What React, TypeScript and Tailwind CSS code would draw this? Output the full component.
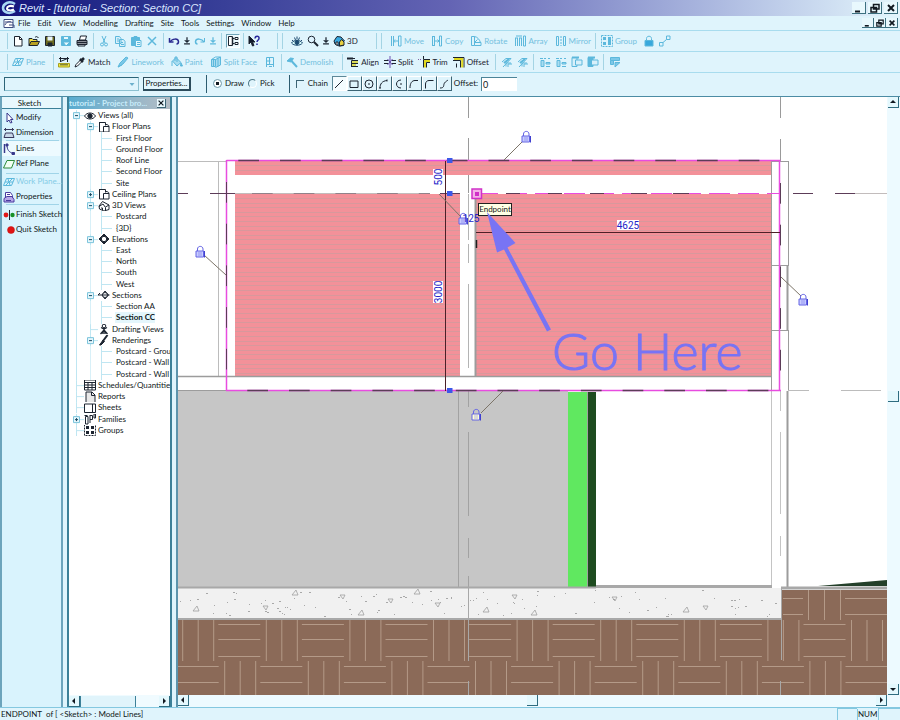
import React from "react";

const CYAN = "#5cb8dc";
const INK = "#1c2430";

type IconProps = { children: React.ReactNode; color?: string; size?: string };

function Icon({ children, color = INK, size = "h-3 w-3" }: IconProps) {
  return (
    <svg viewBox="0 0 12 12" className={`${size} shrink-0`} fill="none" stroke={color} strokeWidth="1" aria-hidden="true">
      {children}
    </svg>
  );
}

/* ---------- toolbar glyphs ---------- */

const NewIcon = () => (
  <Icon><path d="M2.500 1.500h5l2.500 2.500v7h-7.500z" fill="#fff" /><path d="M7.500 1.500v3h2.500" /></Icon>
);
const OpenIcon = () => (
  <Icon><path d="M1 10.500V3.500h3l1 1h4v2" fill="#f4e04a" /><path d="M1 10.500l2-4h8.500l-2 4z" fill="#b8a020" /><path d="M7 2.500c1-1.500 2.500-1 3.500.5" /></Icon>
);
const SaveIcon = () => (
  <Icon><path d="M1.500 1.500h9v9h-9z" fill="#6c6a20" /><path d="M3.500 1.500h5v4h-5z" fill="#e8f4f8" stroke="none" /><path d="M4 8h4v3H4z" fill="#1c2430" /></Icon>
);
const SaveAllIcon = () => (
  <Icon color={CYAN}><path d="M1.500 1.500h9v9h-9z" fill="#5cb8dc" /><path d="M3.500 1.500h5v3h-5z" fill="#e8f8fd" /><path d="M3 7l3 4 4-4z" fill="#e8f8fd" /></Icon>
);
const PrintIcon = () => (
  <Icon><path d="M3.500 5l1-4h6l-1 4z" fill="#fff" /><path d="M1 5.500h10v4H1z" fill="#8a8f98" /><path d="M2 9.500h7v1.500H2zM1 7.500h10" /></Icon>
);
const CutIcon = () => (
  <Icon color={CYAN}><path d="M4 1l3 7M8 1L5 8" /><circle cx="4" cy="9.500" r="1.500" /><circle cx="8" cy="9.500" r="1.500" /></Icon>
);
const CopyIcon = () => (
  <Icon color={CYAN}><path d="M1.500 1.500h4l1.500 2v5H1.500zM5.500 4.500h4l1.500 2v5H5.500z" fill="#d8f0fa" /><path d="M3 4h2M3 6h2M7 7.500h2M7 9.500h3" /></Icon>
);
const PasteIcon = () => (
  <Icon color={CYAN}><path d="M1.500 2.500h8v8h-8z" fill="#5cb8dc" /><path d="M4 1.500h3v2H4z" /><path d="M5.500 5.500h5.500v6H5.500z" fill="#e8f8fd" /><path d="M7 7.500h3M7 9.500h3" /></Icon>
);
const DeleteIcon = () => (
  <Icon color={CYAN}><path d="M2 2l8 8M10 2l-8 8" strokeWidth="1.500" /></Icon>
);
const UndoIcon = () => (
  <Icon color="#2a2a90"><path d="M1.500 3v4h4" strokeWidth="1.500" /><path d="M2 7c2-3.500 8-4 8.500-.5 0 1.500-1 2.500-2 2.500" strokeWidth="1.500" /></Icon>
);
const RedoIcon = () => (
  <Icon color={CYAN}><path d="M10.500 3v4h-4" /><path d="M10 7C8 3.500 2 3 1.500 6.500 1.500 8 2.500 9 3.500 9" strokeWidth="1.500" /></Icon>
);
const DropIcon = ({ color = INK }: { color?: string }) => (
  <Icon color={color} size="h-3 w-2.5"><path d="M6 1.500v4M2.500 9.500h7" strokeWidth="1.500" /><path d="M2.500 5h7L6 8.500z" fill={color} stroke="none" /></Icon>
);
const BrowserIcon = () => (
  <Icon><path d="M1.500 1.500h4v9h-4zM5.500 3.500h2M5.500 8.500h2M8 2.500h3v2H8zM8 7.500h3v2H8z" fill="#fff" /><path d="M5.500 2v8" strokeWidth="1.500" /></Icon>
);
const HelpIcon = () => (
  <Icon><path d="M1 1v8l2-2 1.500 4 1.500-.5L4.500 7H7z" fill="#10182a" /><path d="M7 3.500C7 .5 11.500.5 11 3.500c0 1.500-2 1.500-2 3.500M9 8.500v1.500" stroke="#28289c" strokeWidth="1.500" /></Icon>
);
const EyeIcon = () => (
  <Icon color="#1c4a70"><path d="M.5 8C3 4.500 9 4.500 11.500 8 9 11 3 11 .5 8z" fill="#dff" /><circle cx="6" cy="7.500" r="2" fill="#1c4a70" /><path d="M1 5l1.500 1.500M3.500 2.500L4.500 5M6 1.500v3M8.500 2.500L7.500 5M11 5L9.500 6.500" /></Icon>
);
const ZoomIcon = () => (
  <Icon><circle cx="4.500" cy="4.500" r="3.300" fill="#dff4ff" /><path d="M7 7l4 4" strokeWidth="2" /></Icon>
);
const HouseIcon = () => (
  <Icon><path d="M1 6l3-4.500 4 .5 3.500 4-1 .5v4L6 11 2 9z" fill="#38a8e0" /><path d="M6.500 7l2-2.500 2.500 2.500v3L6.500 11z" fill="#e8d040" /><path d="M3 7h2v3H3z" fill="#fff" /></Icon>
);
const MoveIcon = () => (
  <Icon color={CYAN}><path d="M1.500 1v10M3.500 1v10M8.500 1v10h2.500V1zM3.500 6h5M5 4.500L3.500 6 5 7.500" /></Icon>
);
const CopyObjIcon = () => (
  <Icon color={CYAN}><path d="M1.500 1v10M3.500 1v10M1.500 1.500h2M1.500 10.500h2M8.500 1v10h2V1zM3.500 6H8M6.500 4.500L8 6 6.500 7.500" /></Icon>
);
const RotateIcon = () => (
  <Icon color={CYAN}><path d="M1.500 1.500h3v9h-3zM4.500 1.500c3 .5 5 3 6 6M4.500 10.500h6.500v-3H4.500M4.500 7.500l3-3" /></Icon>
);
const ArrayIcon = () => (
  <Icon color={CYAN}><path d="M1.500 3v8M3.500 3v8M5.500 3v8M7.500 3v8M9.500 1v10h2V1zM1 3h3M5 3h3M2 1h6" /></Icon>
);
const MirrorIcon = () => (
  <Icon color={CYAN}><path d="M1.500 1.500h2v9h-2zM8.500 1.500h2v9h-2z" /><path d="M6 1v10" strokeDasharray="2 1" /></Icon>
);
const GroupIcon = () => (
  <Icon color={CYAN}><path d="M.5 .5h11v11H.5z" strokeDasharray="2 1" /><path d="M2 2h3v3H2zM2 7h3v3H2zM7 2h3v8H7z" fill={CYAN} stroke="none" /></Icon>
);
const PinIcon = () => (
  <Icon color={CYAN}><path d="M3.500 6V3.500c0-3 5-3 5 0V6" /><path d="M2 5.500h8V11H2z" fill="#38a8dc" /></Icon>
);
const LinkIcon = () => (
  <Icon color={CYAN}><path d="M.5 7.500h3.500V11H.5zM7.500 1h3.500v3.500H7.500zM4 7.500L7.500 4.500" /></Icon>
);

const PlaneIcon = () => (
  <Icon color={CYAN}><path d="M3.500 2.500h8l-3 7H.5zM3 9L9 3M5 3l2 6M2 6h8" /></Icon>
);
const TapeIcon = () => (
  <Icon><path d="M2.500 1v5M9.500 1v5M1 2.500h10M2.500 5.500l7-3" /><path d="M.5 7.500h11v3.500H.5z" fill="#f0e840" stroke="#a8a020" /><path d="M3 8v1.500M5 8v1.500M7 8v1.500M9 8v1.500" /></Icon>
);
const MatchIcon = () => (
  <Icon><path d="M1 11l1-2.500L7 3.500l1.500 1.500-5 5z" fill="#fff" /><path d="M6 3l3 3M8 4l2-2" strokeWidth="2.500" /></Icon>
);
const LineworkIcon = () => (
  <Icon color={CYAN}><path d="M1 11l2-4 6-6 2 1-5 6z" fill="#7cc8e8" /><path d="M1 11l4-2" /></Icon>
);
const PaintIcon = () => (
  <Icon color={CYAN}><path d="M1.500 5L5 1.500l5 5L6 10z" fill="#a8dcf0" /><path d="M4 5V1h2v5" /><path d="M10 7l1.500 3h-2zM1 5v5" fill={CYAN} /></Icon>
);
const SplitFaceIcon = () => (
  <Icon color={CYAN}><path d="M1.500 3.500h4v7h-4zM5.500 3.500L10.500 1v8l-5 2.500" fill="#a8dcf0" /><path d="M3.500 3v8M8 2.500v8M1.500 3.500l4-2.500h5" /></Icon>
);
const DoorIcon = () => (
  <Icon color={CYAN}><path d="M2.500 1.500h7v7h-7zM5.500 1.500v7M2.500 5h4M2.500 8v3M9.500 5v6M5 10.500h3" /></Icon>
);
const HammerIcon = () => (
  <Icon color={CYAN}><path d="M1 5l3.500-3 3 .5L5 6z" fill={CYAN} /><path d="M5.500 5L11 11" strokeWidth="2" /></Icon>
);
const AlignIcon = () => (
  <Icon><path d="M0 2.500h8M1 1v3M3 1v3M5 1v3" /><path d="M4.500 4.500H11M4.500 4.500V11M4.500 7.500H11M4.500 10.500H11" /><path d="M5 6h6M5 9h4" stroke="#d8d020" strokeWidth="1.500" /></Icon>
);
const SplitIcon = () => (
  <Icon><path d="M0 4.500h4.500M0 7.500h4.500M7.500 4.500H12M7.500 7.500H12" /><path d="M6 0v12M3.500 3l5 6M8.500 3l-5 6" stroke="#6a50b0" /></Icon>
);
const TrimIcon = () => (
  <Icon><path d="M0 3.500h4" stroke="#8060a0" strokeDasharray="1 1" /><path d="M5.500 11.500v-8H12M8.500 11.500v-5H12M5.500 0v3" /><path d="M7 11.500V5h5" stroke="#e0d820" strokeWidth="2" /></Icon>
);
const OffsetIcon = () => (
  <Icon><path d="M0 1.500h11v10M0 4.500h7.500v7" /><path d="M1 3h8.200v8.500" stroke="#e0d820" strokeWidth="2" /><path d="M3.500 7.500v4" /></Icon>
);
const TrimOneIcon = () => (
  <Icon color={CYAN}><path d="M1 6l4-3.500h5L2 11" /><path d="M3 7l5-4" strokeWidth="2" /><path d="M5 10.500V7h5M7 11V8h4" /></Icon>
);
const AttachIcon = () => (
  <Icon color={CYAN}><path d="M1 2.500h3M5 2.500h2M9 2.500h2M2 4.500v6h3v-6zM7 6.500h4v1.500H7zM7 10.500h4" fill="#a8dcf0" /></Icon>
);
const JoinIcon = ({ solid = false }: { solid?: boolean }) => (
  <Icon color={CYAN}><path d="M1 1.500h5v9H1z" fill={solid ? CYAN : "#d8f0fa"} /><path d="M4.500 4h6.500v5H4.500z" fill="#d8f0fa" /><path d="M1 1.500h7" strokeWidth="2" /></Icon>
);
const TagIcon = () => (
  <Icon color={CYAN}><path d="M1.500 1.500h9v3h-9zM1.500 4.500v4h3v-4M6 11V6.500h5L6 11z" fill="#7cc8e8" /></Icon>
);

/* ---------- sketch panel glyphs ---------- */

const ArrowIcon = () => (
  <Icon color="#38388c"><path d="M4 1v9l2-2 1.500 3 1.500-.5L7.500 7.500H10z" fill="#fff" /></Icon>
);
const DimIcon = () => (
  <Icon color="#38385c"><path d="M1 2.500h10M2.500 1v3M9.500 1v3" /><path d="M2.500 6h7l1.500 4.500H1z" fill="#c8d8e8" /></Icon>
);
const LinesIcon = () => (
  <Icon color="#38388c"><path d="M1.500 1v9" strokeWidth="1.500" /><path d="M4 2c0 5 2 7 6 8.500" /><path d="M3 1h2v2H3zM9 9.500h2.500v2H9z" fill="#38388c" /></Icon>
);
const RefIcon = () => (
  <Icon color="#2e8b3a"><path d="M4 2.500h7.500l-3 7.500H.5z" fill="#f2fff2" /></Icon>
);
const PropsIcon = () => (
  <Icon color="#4a3aa0"><path d="M2.500 1.500h5l2 3v4h-7z" fill="#fff" /><path d="M1 7.500l3-2h5l2 3v2.500H1z" fill="#b8a8e8" /><path d="M4 3.500h3M3 9.500h5" /></Icon>
);
const FinishIcon = () => (
  <Icon><circle cx="3" cy="6" r="2.400" fill="#e01818" stroke="none" /><circle cx="9.500" cy="6" r="2.200" fill="#189028" stroke="none" /><path d="M6.500 1v10" /></Icon>
);
const QuitIcon = () => (
  <Icon><circle cx="8" cy="6" r="3.500" fill="#e01414" stroke="#c01010" strokeWidth=".5" /></Icon>
);

/* ---------- tree glyphs ---------- */

const treeIcons: Record<string, React.ReactNode> = {
  eye: <><path d="M.5 6C3 2 9 2 11.500 6 9 10 3 10 .5 6z" fill="#fff" /><circle cx="6" cy="6" r="2.200" fill={INK} /></>,
  plan: <><path d="M1.500 1v10h4M1.500 1.500h6v3M5.500 5.500h5.500v5.500H5.500zM8 3.500c2 0 3 1 3 2" fill="#fff" /></>,
  house: <><path d="M1 6l3.500-4.500L11 5v4.500L6 11 1.500 9z" fill="#fff" /><path d="M1 6.500l4-2.500 2.500 3.500V11M7.500 7L11 5M3 8h1.500v2" /></>,
  elev: <><path d="M6 1l5 5-5 5-5-5z" fill={INK} /><circle cx="6" cy="6" r="2.700" fill="#fff" /></>,
  section: <><path d="M0 6h11.500M0 6l2-2M7 2l3.500 4L7 10 4 6z" /><circle cx="7" cy="6" r="2.500" fill="#fff" /><path d="M4.500 6h5" /></>,
  draft: <><circle cx="6" cy="3" r="1.800" /><path d="M6 5v3M3 4.500l3 1.500 3-1.500M6 7l-3.500 4M6 7l3.500 4M3 10h6" strokeWidth="1.300" /></>,
  brush: <><path d="M9.500 1L5 7" strokeWidth="2" /><path d="M5 6l1.500 1.500L3 11H1.500L3 9z" fill={INK} /></>,
  table: <><path d="M.5 1h11v10H.5zM.5 3.500h11M.5 6h11M.5 8.500h11M4 3.500V11M8 3.500V11" /></>,
  report: <><path d="M2 1h6l3 3v7.500H2z" fill="#e8e8e8" /><path d="M7.500 1v3.500H11" /></>,
  sheet: <><path d="M.5 2h11v8.500H.5z" fill="#fff" /><path d="M8.500 2v8.500" /></>,
  family: <><path d="M1.500 3.500h2.500V11H1.500zM6 2v8M6 2.500h2.500v4H6M10 1h1.500v4H10z" /><path d="M.5 2.500h3" /></>,
  group: <><path d="M.5.500h11v11H.5z" strokeDasharray="2 1" /><path d="M2 2h3v3H2zM2 7h3v3H2zM7 2h3v3H7zM7 7h3v3H7z" fill={INK} stroke="none" /></>,
};

type Row = { text: string; level: 0 | 1 | 2; icon?: string; box?: "-" | "+"; bold?: boolean };

const rows: Row[] = [
  { text: "Views (all)", level: 0, icon: "eye", box: "-" },
  { text: "Floor Plans", level: 1, icon: "plan", box: "-" },
  { text: "First Floor", level: 2 },
  { text: "Ground Floor", level: 2 },
  { text: "Roof Line", level: 2 },
  { text: "Second Floor", level: 2 },
  { text: "Site", level: 2 },
  { text: "Ceiling Plans", level: 1, icon: "plan", box: "+" },
  { text: "3D Views", level: 1, icon: "house", box: "-" },
  { text: "Postcard", level: 2 },
  { text: "{3D}", level: 2 },
  { text: "Elevations", level: 1, icon: "elev", box: "-" },
  { text: "East", level: 2 },
  { text: "North", level: 2 },
  { text: "South", level: 2 },
  { text: "West", level: 2 },
  { text: "Sections", level: 1, icon: "section", box: "-" },
  { text: "Section AA", level: 2 },
  { text: "Section CC", level: 2, bold: true },
  { text: "Drafting Views", level: 1, icon: "draft" },
  { text: "Renderings", level: 1, icon: "brush", box: "-" },
  { text: "Postcard - Grou", level: 2 },
  { text: "Postcard - Wall", level: 2 },
  { text: "Postcard - Wall", level: 2 },
  { text: "Schedules/Quantitie", level: 0, icon: "table" },
  { text: "Reports", level: 0, icon: "report" },
  { text: "Sheets", level: 0, icon: "sheet" },
  { text: "Families", level: 0, icon: "family", box: "+" },
  { text: "Groups", level: 0, icon: "group" },
];

function Expander({ box }: { box?: "-" | "+" }) {
  return (
    <svg viewBox="0 0 11 11" className="h-full w-[11px] shrink-0" fill="none" stroke="#bfe6f2" aria-hidden="true">
      <path d="M3.500 0v11M3.500 5.500H11" />
      {box && <path d="M.5 2.500h6v6h-6z" fill="#e4f6fc" stroke="#7cc4dc" />}
      {box && <path d={box === "+" ? "M2 5.500h3M3.500 4v3" : "M2 5.500h3"} stroke="#1c4860" />}
    </svg>
  );
}

function TreeRow({ row }: { row: Row }) {
  return (
    <li className="flex min-w-0 items-center overflow-hidden">
      {row.level === 0 && <Expander box={row.box} />}
      {row.level > 0 && <span className="ml-[3px] h-full w-[11px] shrink-0 border-l border-[#bfe6f2]" />}
      {row.level === 1 && <Expander box={row.box} />}
      {row.level === 2 && <span className="ml-[3px] h-full w-[11px] shrink-0 border-l border-[#d8f0f8]" />}
      {row.level === 2 && (
        <span className="flex h-full w-3.5 shrink-0 items-center border-l border-[#bfe6f2]">
          <span className="w-2.5 border-t border-[#bfe6f2]" />
        </span>
      )}
      {row.icon && <Icon>{treeIcons[row.icon]}</Icon>}
      <span className={`whitespace-nowrap ${row.icon ? "pl-0.5" : "pl-px"} ${row.bold ? "bg-[#e4f6fc] font-bold" : ""}`}>{row.text}</span>
    </li>
  );
}

/* ---------- toolbar parts ---------- */

const Sep = () => (
  <span className="flex h-4 w-1.5 shrink-0 justify-center">
    <span className="w-px bg-[#a4d4e4]" />
  </span>
);

function Tool({ icon, label, off, name }: { icon: React.ReactNode; label?: string; off?: boolean; name?: string }) {
  return (
    <button
      type="button"
      aria-label={label ?? name}
      className={`flex h-4 shrink-0 items-center whitespace-nowrap ${off ? "text-[#72c0de]" : "text-[#1c2430]"}`}
    >
      <span className="flex w-4 justify-center">{icon}</span>
      {label}
    </button>
  );
}

function Drop({ color, name }: { color?: string; name: string }) {
  return (
    <button type="button" aria-label={name} className="w-2.5 shrink-0">
      <DropIcon color={color} />
    </button>
  );
}

function WinButton({ kind, small }: { kind: "min" | "restore" | "close"; small?: boolean }) {
  return (
    <button
      type="button"
      aria-label={kind}
      className={`flex items-center justify-center border-r border-b border-[#3c7080] bg-[#e8f8fd] ${small ? "h-2.5 w-3" : "h-3 w-3.5"}`}
    >
      <svg viewBox="0 0 10 10" className={small ? "h-2 w-2" : "h-2.5 w-2.5"} fill="none" stroke="#101820" strokeWidth="1.500" aria-hidden="true">
        {kind === "min" && <path d="M1 8.500h5" strokeWidth="2" />}
        {kind === "restore" && <path d="M3.500 1.500H9V6H3.500zM1 4.500h5.500V9H1z" fill="#e8f8fd" />}
        {kind === "close" && <path d="M2 2l6 6M8 2L2 8" strokeWidth="2" />}
      </svg>
    </button>
  );
}

function ScrollButton({ dir }: { dir: "up" | "down" | "left" | "right" }) {
  const d = { up: "M2 6h6L5 3z", down: "M2 4h6L5 7z", left: "M6 2v6L3 5z", right: "M4 2v6l3-3z" }[dir];
  return (
    <button type="button" aria-label={`Scroll ${dir}`} className="flex h-[11px] w-[11px] shrink-0 items-center justify-center border-r border-b border-[#2f6c80] bg-[#e4f8fd]">
      <svg viewBox="0 0 10 10" className="h-2.5 w-2.5" fill="#101820" aria-hidden="true"><path d={d} /></svg>
    </button>
  );
}

const Thumb = () => <span className="h-[11px] w-[11px] shrink-0 border-r border-b border-[#2f6c80] bg-[#e4f8fd]" />;

const shapes = [
  ["Line", "M2 10L10 2"],
  ["Rectangle", "M2 3h8v6.500H2z"],
  ["Circle", "M6 2a4 4 0 100 8 4 4 0 000-8M5 6h2"],
  ["Arc through points", "M2 10c0-4 2-7 7-7.500M1 10h2M9 1.500v2"],
  ["Arc from center", "M8 2c-6 0-6 8 0 8M7 6h2"],
  ["Tangent arc", "M2 10c0-5 2-7.500 5-7.500h3"],
  ["Fillet arc", "M2.500 10.500V6c0-2 1.500-3.500 3.500-3.500h4.500"],
  ["Spline", "M2 10c5 0 3-3 4.500-5S9 3 10 2"],
];

/* ---------- drawing ---------- */

const steps = (count: number, start: number, pitch: number) => Array.from({ length: count }, (_, i) => start + i * pitch);

const noise = (n: number) => {
  const v = Math.sin(n * 12.9898) * 43758.5453;
  return v - Math.floor(v);
};

function Siding({ x, y, width, height }: { x: number; y: number; width: number; height: number }) {
  const count = Math.floor((height - 1) / 4.600);
  const d = steps(count, y + 4, 4.600).map((line) => `M${x} ${Math.round(line) + 0.5}h${width}`).join("");
  return (
    <g>
      <rect x={x} y={y} width={width} height={height} fill="#f39199" />
      <path d={d} stroke="#d8989c" />
    </g>
  );
}

function Lock({ x, y, fill = "#c8ccff" }: { x: number; y: number; fill?: string }) {
  return (
    <g transform={`translate(${x} ${y})`} stroke="#6464e4" fill="none">
      <path d="M-2.500 -1v-2c0-3.500 5.500-3.500 5.500 0v2" />
      <path d="M-4 -1h7.500v6H-4z" fill={fill} />
      <path d="M4.500 -1v6.500" stroke="#4040d0" />
      <path d="M-2 1h4M-2 3h4" strokeOpacity=".5" />
    </g>
  );
}

function Weave() {
  const p = 83.6;
  return (
    <g stroke="#b49a88" fill="none">
      {steps(9, 134.7, p).map((x) => (
        <path key={`u${x}`} d={`M${x} 624.500h42M${x} 639.500h42M${x} 656.500h42M${x + 48} 620v41M${x + 63.500} 620v41M${x + 79} 620v41`} />
      ))}
      {steps(9, 176.700, p).map((x) => (
        <path key={`l${x}`} d={`M${x} 666.500h42M${x} 682.500h42M${x + 48} 661v34M${x + 63.500} 661v34M${x + 79} 661v34`} />
      ))}
      <path d="M783 598.500h20M783 614.500h20M808.500 590v30M824.500 590v30M840.500 590v30M845 598.500h42M845 614.500h42" />
    </g>
  );
}

function Drawing() {
  const specks = Array.from({ length: 110 }, (_, i) => [Math.round(180 + noise(i + 1) * 598), Math.round(590 + noise(i + 500) * 26)]);
  const chips = [[196, 609], [265, 608], [295, 593], [342, 597], [361, 613], [390, 601], [417, 592], [437, 605], [486, 610], [514, 597], [534, 613], [614, 599], [686, 610], [705, 608]];
  return (
    <svg viewBox="178 97 709 598" preserveAspectRatio="xMidYMid slice" className="block h-full w-full bg-white font-['Roboto',sans-serif]" role="img" aria-label="Section CC">
      <g stroke="#bcbcbc">
        <path d="M178 161.500h48M218.500 161v215" />
        <path d="M468.500 97v21M468.500 138v22M468.500 175v18M780.500 97v21M780.500 139v22" stroke="#9a9a9a" />
        <path d="M788 390.500h21M841 390.500h40" />
      </g>

      <Siding x={235} y={161} width={536} height={14} />
      <Siding x={235} y={194} width={225} height={182} />
      <Siding x={476} y={194} width={295} height={182} />
      <path d="M178 376.500h593" stroke="#9c9c9c" strokeWidth="1.500" />
      <path d="M475.500 194v182" stroke="#9c9c9c" strokeWidth="2" />
      <path d="M468.500 194v46M468.500 244v19M468.500 284v84" stroke="#b4b4b4" />

      <rect x="178" y="391" width="390" height="196" fill="#c6c6c6" />
      <path d="M178 390.500h48" stroke="#9c9c9c" />
      <path d="M458.500 391v196M468.500 391v16M468.500 432v84M468.500 538v20M468.500 576v12" stroke="#a2a2a2" />
      <rect x="568" y="392" width="19" height="196" fill="#60e860" />
      <rect x="587" y="392" width="1" height="196" fill="#a0a0a0" />
      <rect x="588" y="392" width="8" height="195" fill="#1e4c20" />

      <path d="M771.500 161v230M788.500 161v104M788.500 330v60M772 265.500h17M772 330.500h17M772 161.500h17" stroke="#9c9c9c" fill="none" />
      <path d="M787.500 265v66M787.500 391v196" stroke="#9c9c9c" strokeWidth="2" />
      <path d="M771.500 391v196M780.500 391v20M780.500 432v82M780.500 536v20" stroke="#c4c4c4" />

      <rect x="178" y="620" width="709" height="75" fill="#8b6a58" />
      <rect x="781" y="590" width="106" height="32" fill="#8b6a58" />
      <Weave />
      <rect x="178" y="588" width="603" height="31" fill="#f1f1f1" />
      <path d="M178 587.500h418M178 619h604" stroke="#a8a8a8" strokeWidth="2" />
      <path d="M596 586.500h176M781 588h106" stroke="#a8a8a8" strokeWidth="3" />
      <path d="M781.500 588v72M468.500 588v73M468.500 681v14M780.500 681v14" stroke="#a8a8a8" />
      <path d="M818 586l69-6v6z" fill="#24402a" />
      {specks.map(([x, y], i) => (
        <rect key={i} x={x} y={y} width={i % 3 ? 1 : 2} height="1" fill="#a8a8a8" />
      ))}
      {chips.map(([x, y], i) => (
        <path key={x} d={i % 2 ? `M${x - 2} ${y - 2}l5 0l-2 4z` : `M${x - 3} ${y + 2}l4-5l2 5z`} fill="none" stroke="#a0a0a0" strokeWidth=".8" />
      ))}

      <g stroke="#e84ce0" fill="none">
        <path d="M226.500 160.500h554M226.500 160v231M779.500 160v231M226 390.500h555" strokeWidth="1.500" />
        <path d="M477 193.500h303" strokeDasharray="21 8" />
      </g>
      <g stroke="#5c3c58" fill="none">
        <path d="M238.300 160.500H771M247.300 390.500H780" strokeWidth="1.500" strokeDasharray="20.700 21" />
        <path d="M226.500 182v208M780.500 183v208" strokeDasharray="20.700 21" />
        <path d="M252 193.500h178" strokeDasharray="20.700 21" />
        <path d="M178 193.500h10M210 193.500h25M440 193.500h20M506 193.500h14M548 193.500h14M590 193.500h14M631 193.500h16M673 193.500h16M793 193.500h20M835 193.500h20" />
      </g>
      <path d="M235 193.500h195M855 193.500h32" stroke="#a8a0a0" strokeOpacity=".7" />

      <path d="M445.500 161v230M476 232.500h304" stroke="#4c2028" />
      <path d="M476.500 240v8" stroke="#202020" strokeWidth="1.500" />
      <g stroke="#7c7468" fill="none">
        <path d="M523 141l-19 19M204 255l22 20M781 277l20 19M503 391l-22 22M439 194l22 23" />
      </g>
      <Lock x={526} y={137} />
      <Lock x={200} y={252} />
      <Lock x={803} y={300} />
      <Lock x={476} y={415} fill="#ffffd8" />
      <Lock x={463} y={219} />

      <g fill="#3c58e8">
        <path d="M447 158h5.500v5H447zM447 191h5.500v5H447zM447 388h5.500v5H447z" />
      </g>
      <path d="M472 189h9.500v9.500H472z" fill="#f4b0e8" stroke="#d030c8" strokeWidth="1.500" />
      <path d="M475 192h4v4h-4z" fill="#d030c8" />

      <g fontSize="10" fill="#2424c8" textAnchor="middle">
        <rect x="433" y="169" width="10" height="16" fill="#fff" />
        <text transform="translate(442 177) rotate(-90)">500</text>
        <rect x="433" y="281" width="10" height="22" fill="#fff" />
        <text transform="translate(442 292) rotate(-90)">3000</text>
        <rect x="617" y="220" width="22" height="10" fill="#fff" />
        <text x="628" y="229">4625</text>
        <text x="471" y="222">125</text>
      </g>

      <rect x="478.500" y="203.500" width="33" height="12" fill="#ffffe4" stroke="#202020" />
      <text x="495" y="212" fontSize="8" textAnchor="middle" fill="#202020" className="font-['Lato']">Endpoint</text>

      <g fill="#7874f4">
        <path d="M487 212l28.500 31-8 4.500 43.500 82-4 2-43-82-7 3z" />
        <text x="552" y="370" fontSize="52" stroke="#7874f4" className="font-['Lato'] font-light">Go Here</text>
      </g>
    </svg>
  );
}

/* ---------- window ---------- */

function SketchItem({ icon, label, off, on }: { icon: React.ReactNode; label: string; off?: boolean; on?: boolean }) {
  return (
    <button
      type="button"
      className={`flex h-[15px] w-full items-center gap-px pl-px whitespace-nowrap ${off ? "text-[#84cbe6]" : ""} ${on ? "bg-[#edfaff]" : ""}`}
    >
      {icon}
      {label}
    </button>
  );
}

const Rule = () => <hr className="mr-0.5 ml-1 border-[#a0d4e8]" />;

export default function App() {
  return (
    <div className="flex h-screen flex-col overflow-hidden bg-[#dff4fc] font-['Lato',sans-serif] text-[8px] leading-[11px] text-[#101820]">
      <header className="flex h-4 shrink-0 items-center bg-linear-to-r from-[#14147c] via-[#6464b4] via-50% to-[#e4f6fc] pr-0.5">
        <svg viewBox="0 0 16 14" className="ml-px h-3.5 w-4" fill="none" aria-hidden="true">
          <path d="M14 3C8-1 2 3 2 7s6 7 12 3" stroke="#a8d8f4" strokeWidth="2.500" />
          <path d="M13 5.500c-4-1.500-7 0-7 2s4 2.500 7 1" stroke="#fff" strokeWidth="2" />
        </svg>
        <h1 className="flex-1 pt-px pl-0.5 font-['Liberation_Sans',sans-serif] text-[11px] leading-[15px] text-[#dce8ff] italic">Revit - [tutorial - Section: Section CC]</h1>
        <div className="flex gap-0.5">
          <WinButton kind="min" />
          <WinButton kind="restore" />
          <WinButton kind="close" />
        </div>
      </header>

      <nav className="flex h-[15px] shrink-0 items-center border-b border-[#a8dcee] pr-0.5 pl-0.5">
        <svg viewBox="0 0 12 12" className="mr-0.5 h-3 w-3.5" fill="none" stroke="#3c4c80" aria-hidden="true">
          <path d="M1 2.500h9v8H1z" fill="#fff" /><path d="M2 8c2-4 5-4 8-2M6 8h5v3" /><path d="M2 5h6" />
        </svg>
        <div className="flex flex-1 gap-[7px]">
          {["File", "Edit", "View", "Modelling", "Drafting", "Site", "Tools", "Settings", "Window", "Help"].map((m) => (
            <button key={m} type="button">{m}</button>
          ))}
        </div>
        <div className="flex">
          <WinButton kind="min" small />
          <WinButton kind="restore" small />
          <WinButton kind="close" small />
        </div>
      </nav>

      <div className="flex h-[21px] shrink-0 items-center border-b border-[#a8dcee]">
        <div className="flex w-[278px] shrink-0 items-center border-r border-[#a4d4e4] pl-1">
          <Sep />
          <Tool icon={<NewIcon />} name="New" />
          <Tool icon={<OpenIcon />} name="Open" />
          <Tool icon={<SaveIcon />} name="Save" />
          <Tool icon={<SaveAllIcon />} name="Save to central" off />
          <Tool icon={<PrintIcon />} name="Print" />
          <Sep />
          <Tool icon={<CutIcon />} name="Cut" off />
          <Tool icon={<CopyIcon />} name="Copy to clipboard" off />
          <Tool icon={<PasteIcon />} name="Paste" off />
          <Tool icon={<DeleteIcon />} name="Delete" off />
          <Sep />
          <Tool icon={<UndoIcon />} name="Undo" />
          <Drop name="Undo list" />
          <Tool icon={<RedoIcon />} name="Redo" off />
          <Drop name="Redo list" color={CYAN} />
          <Sep />
          <button type="button" aria-label="Project browser" className="ml-0.5 border border-[#70a4b8] border-r-white border-b-white bg-[#edfaff]">
            <BrowserIcon />
          </button>
          <Sep />
          <Tool icon={<HelpIcon />} name="Help mode" />
        </div>
        <div className="ml-1 flex w-[95px] shrink-0 items-center border-r border-l border-[#a4d4e4] pl-1.5">
          <Tool icon={<EyeIcon />} name="Dynamic view" />
          <Tool icon={<ZoomIcon />} name="Zoom" />
          <Drop name="Zoom list" />
          <Tool icon={<HouseIcon />} label="3D" />
        </div>
        <div className="ml-1 flex items-center border-l border-[#a4d4e4] pl-1.5">
          <div className="flex gap-[5px]">
            <Tool icon={<MoveIcon />} label="Move" off />
            <Tool icon={<CopyObjIcon />} label="Copy" off />
            <Tool icon={<RotateIcon />} label="Rotate" off />
            <Tool icon={<ArrayIcon />} label="Array" off />
            <Tool icon={<MirrorIcon />} label="Mirror" off />
          </div>
          <span className="w-0.5" />
          <Sep />
          <Tool icon={<GroupIcon />} label="Group" off />
          <span className="w-1" />
          <Tool icon={<PinIcon />} name="Pin" off />
          <Tool icon={<LinkIcon />} name="Relate" off />
        </div>
      </div>

      <div className="flex h-[21px] shrink-0 items-center border-b border-[#a8dcee] pl-1">
        <Sep />
        <div className="flex w-10 shrink-0"><Tool icon={<PlaneIcon />} label="Plane" off /></div>
        <Sep />
        <div className="flex shrink-0 items-center gap-[5px]">
          <div className="flex"><Tool icon={<TapeIcon />} name="Measure" /><Tool icon={<MatchIcon />} label="Match" /></div>
          <Tool icon={<LineworkIcon />} label="Linework" off />
          <Tool icon={<PaintIcon />} label="Paint" off />
          <Tool icon={<SplitFaceIcon />} label="Split Face" off />
          <Tool icon={<DoorIcon />} name="Opening" off />
        </div>
        <Sep />
        <div className="flex pr-1.5"><Tool icon={<HammerIcon />} label="Demolish" off /></div>
        <Sep />
        <div className="flex shrink-0 gap-[3px] pr-1">
          <Tool icon={<AlignIcon />} label="Align" />
          <Tool icon={<SplitIcon />} label="Split" />
          <Tool icon={<TrimIcon />} label="Trim" />
          <Tool icon={<OffsetIcon />} label="Offset" />
        </div>
        <Sep />
        <Tool icon={<TrimOneIcon />} name="Extend one" off />
        <Tool icon={<TrimOneIcon />} name="Extend many" off />
        <Sep />
        <Tool icon={<AttachIcon />} name="Attach" off />
        <Tool icon={<AttachIcon />} name="Detach" off />
        <Tool icon={<JoinIcon />} name="Join" off />
        <Tool icon={<JoinIcon solid />} name="Unjoin" off />
        <Sep />
        <Tool icon={<TagIcon />} name="Tag" off />
      </div>

      <div className="flex h-[23px] shrink-0 items-center pb-0.5 pl-1">
        <select aria-label="Element type" className="h-[14px] w-[135px] shrink-0 appearance-none border border-[#2c6478] border-r-[#8cc0d0] border-b-[#8cc0d0] text-[8px]">
          <option></option>
        </select>
        <svg viewBox="0 0 10 10" className="-ml-3 h-2.5 w-2.5" fill="#6cb0cc" aria-hidden="true"><path d="M2.500 4h5L5 7z" /></svg>
        <button type="button" className="ml-1.5 h-3.5 w-12 shrink-0 border border-r-2 border-b-2 border-[#2c4c5c] bg-[#e4f6fc] leading-[10px] whitespace-nowrap">Properties...</button>
        <span className="ml-[15px] h-[18px] w-px bg-[#2c5c70]" />
        <label className="ml-1.5 flex items-center gap-[3px] whitespace-nowrap">
          <input type="radio" name="mode" defaultChecked className="h-[9px] w-[9px] appearance-none rounded-full border border-[#6c98a8] bg-white bg-[radial-gradient(#101820_35%,transparent_40%)]" />
          Draw
        </label>
        <label className="ml-1 flex items-center gap-[3px] whitespace-nowrap">
          <input type="radio" name="mode" className="h-[9px] w-[9px] appearance-none rounded-full border border-[#4c7888] border-r-white border-b-white" />
          Pick
        </label>
        <span className="ml-3.5 h-[18px] w-px bg-[#2c5c70]" />
        <label className="ml-1.5 flex items-center gap-1 whitespace-nowrap">
          <input type="checkbox" className="h-2 w-2 appearance-none border-t border-l border-[#3c6474]" />
          Chain
        </label>
        <div className="ml-1 flex shrink-0">
          {shapes.map(([name, d], i) => (
            <button
              key={name}
              type="button"
              aria-label={name}
              className={`flex h-[15px] w-[15px] items-center justify-center border ${i === 0 ? "border-[#5c8898] border-r-white border-b-white bg-[#f4fcff]" : "border-[#3c6474] border-t-white border-l-white"}`}
            >
              <Icon><path d={d} /></Icon>
            </button>
          ))}
        </div>
        <label className="ml-0.5 flex items-center gap-[3px] whitespace-nowrap">
          Offset:
          <input type="text" defaultValue="0" className="h-3.5 w-9 border-t border-l border-[#4c8498] bg-white px-px text-[9px] leading-3" />
        </label>
      </div>

      <main className="flex min-h-0 flex-1 border-t border-[#4c8ca4]">
        <aside className="w-[63px] shrink-0 border-r-2 border-l-2 border-[#6ca4bc] bg-[#d9f3fd]">
          <h2 className="h-3 border-b border-[#3c8098] bg-[#e8f8fd] pr-1 text-center leading-3">Sketch</h2>
          <div className="pt-px">
            <SketchItem icon={<ArrowIcon />} label="Modify" />
            <SketchItem icon={<DimIcon />} label="Dimension" />
            <Rule />
            <SketchItem icon={<LinesIcon />} label="Lines" on />
            <SketchItem icon={<RefIcon />} label="Ref Plane" />
            <div className="pt-0.5">
              <Rule />
            </div>
            <SketchItem icon={<PlaneIcon />} label="Work Plane..." off />
            <SketchItem icon={<PropsIcon />} label="Properties" />
            <Rule />
            <div className="pt-0.5">
              <SketchItem icon={<FinishIcon />} label="Finish Sketch" />
              <SketchItem icon={<QuitIcon />} label="Quit Sketch" />
            </div>
          </div>
        </aside>

        <section className="ml-1 flex w-[105px] shrink-0 flex-col border-r-2 border-l-2 border-[#3c8098] bg-white">
          <div className="flex h-3 shrink-0 items-center bg-linear-to-r from-[#58acd0] to-[#b4bcc4] pr-1">
            <h2 className="min-w-0 flex-1 overflow-hidden font-bold whitespace-nowrap text-[#c8ecfa]">tutorial - Project bro...</h2>
            <button type="button" aria-label="Close project browser" className="flex h-[9px] w-[9px] shrink-0 items-center justify-center border-r border-b border-[#3c6474] bg-[#e8f8fd]">
              <svg viewBox="0 0 10 10" className="h-2 w-2" stroke="#101820" strokeWidth="1.500" aria-hidden="true"><path d="M2 2l6 6M8 2L2 8" /></svg>
            </button>
          </div>
          <ul className="mt-px ml-1 grid h-[326px] shrink-0 auto-rows-fr overflow-hidden">
            {rows.map((row, i) => (
              <TreeRow key={i} row={row} />
            ))}
          </ul>
          <div className="flex-1" />
          <div className="flex h-3 shrink-0 items-center justify-between bg-[#f0fbff]">
            <ScrollButton dir="left" />
            <span className="h-[11px] w-14 border-r border-l border-[#3c8098] bg-[#e0f4fb]" />
            <span className="flex-1" />
            <ScrollButton dir="right" />
          </div>
        </section>

        <section className="ml-1 flex min-w-0 flex-1 flex-col border-l-2 border-[#5c94ac]">
          <div className="flex min-h-0 flex-1">
            <div className="min-w-0 flex-1 overflow-hidden">
              <Drawing />
            </div>
            <div className="flex w-[13px] shrink-0 flex-col items-center bg-[#edfaff]">
              <ScrollButton dir="up" />
              <span className="flex-1" />
              <Thumb />
              <span className="flex-1" />
              <ScrollButton dir="down" />
            </div>
          </div>
          <div className="flex h-3 shrink-0 bg-[#edfaff] pr-[13px]">
            <ScrollButton dir="left" />
            <span className="flex-1" />
            <Thumb />
            <span className="flex-1" />
            <ScrollButton dir="right" />
          </div>
        </section>
      </main>

      <footer className="flex h-[13px] shrink-0 items-center border-t border-[#84c8e0]">
        <span className="flex-1 pt-px pl-px whitespace-pre">ENDPOINT  of [ &lt;Sketch&gt; : Model Lines]</span>
        <span className="h-full w-5 border-t border-l border-[#84c8e0]" />
        <span className="w-5 border-l border-[#84c8e0] text-center">NUM</span>
        <span className="ml-px h-full w-[22px] border-t border-l border-[#84c8e0]" />
      </footer>
    </div>
  );
}
